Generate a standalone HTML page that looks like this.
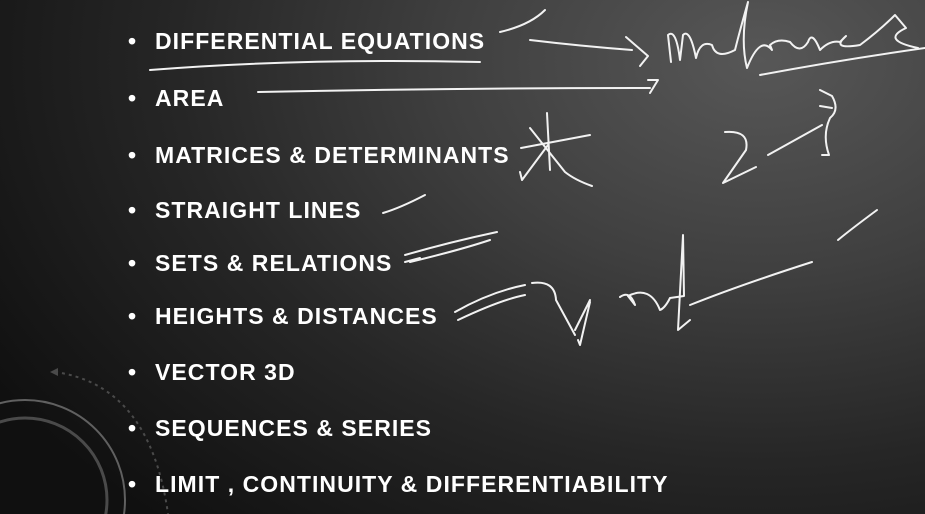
<!DOCTYPE html>
<html><head><meta charset="utf-8"><style>
html,body{margin:0;padding:0;}
body{width:925px;height:514px;overflow:hidden;position:relative;
background:radial-gradient(ellipse 900px 620px at 760px 60px,#575757 0%,#3f3f3f 35%,#262626 65%,#101010 100%);
font-family:"Liberation Sans",sans-serif;}
.it{position:absolute;left:128px;color:#fff;font-weight:bold;font-size:23px;letter-spacing:1.05px;white-space:nowrap;line-height:24px;height:24px;}
.it:before{content:"•";display:inline-block;width:27px;letter-spacing:0;}
svg{position:absolute;left:0;top:0;}
</style></head><body>
<svg width="925" height="514">
<g fill="none" stroke-width="2">
<circle cx="25" cy="500" r="100" stroke="#606060"/>
<circle cx="25" cy="500" r="82" stroke="#4a4a4a" stroke-width="3"/>
<path d="M55 372 Q150 385 168 514" stroke-dasharray="3 4" stroke="#4a4a4a"/>
<path d="M50 372 L58 368 L58 376 Z" fill="#4a4a4a" stroke="none"/>
</g>
<g fill="none" stroke="#f2f2f2" stroke-width="2" stroke-linecap="round" stroke-linejoin="round">
<path d="M150 70 Q300 58 480 62"/>
<path d="M500 32 Q530 25 545 10"/>
<path d="M530 40 Q580 46 632 50 M626 37 L648 56 L640 66"/>
<path d="M671 62 L668 35 Q676 28 680 60 L683 35 Q690 28 696 58 Q700 40 712 45 Q716 60 735 50 Q740 30 748 2 Q740 40 747 68 Q760 35 772 50 L770 45 Q778 38 790 42 Q800 55 808 42 Q812 30 820 50 Q830 40 840 42 L846 36 Q830 50 860 45 Q880 30 895 15 L906 28 Q880 40 918 48"/>
<path d="M760 75 Q840 60 925 48"/>
<path d="M258 92 Q450 88 650 88 M648 80 L658 80 L650 93"/>
<path d="M547 113 L550 170 M530 128 L565 172 Q575 180 592 186 M521 148 L590 135 M522 180 L548 145 M520 172 L522 180"/>
<path d="M725 132 Q750 130 746 150 L723 183 L756 167 M768 155 L822 125 M820 90 L832 96 Q840 110 830 118 Q822 135 829 155 L822 155 M832 108 L820 106"/>
<path d="M383 213 Q400 208 425 195"/>
<path d="M405 255 Q450 242 497 232 M410 262 Q460 250 490 240 M405 262 L420 258"/>
<path d="M455 312 Q490 292 525 285 M458 320 Q500 300 525 295 M532 283 Q555 280 556 300 L575 335 M575 330 L590 300 M590 302 L580 345 L578 340 M620 297 Q630 290 635 305 L628 296 Q650 285 660 310 Q665 308 670 298 L684 296 L683 235 L678 330 L690 320 M690 305 Q740 285 812 262"/>
<path d="M838 240 Q850 230 877 210"/>
</g>
</svg>
<div class="it" style="top:29px">DIFFERENTIAL EQUATIONS</div>
<div class="it" style="top:86px">AREA</div>
<div class="it" style="top:143px">MATRICES &amp; DETERMINANTS</div>
<div class="it" style="top:198px">STRAIGHT LINES</div>
<div class="it" style="top:251px">SETS &amp; RELATIONS</div>
<div class="it" style="top:304px">HEIGHTS &amp; DISTANCES</div>
<div class="it" style="top:360px">VECTOR 3D</div>
<div class="it" style="top:416px">SEQUENCES &amp; SERIES</div>
<div class="it" style="top:472px">LIMIT , CONTINUITY &amp; DIFFERENTIABILITY</div>
</body></html>
